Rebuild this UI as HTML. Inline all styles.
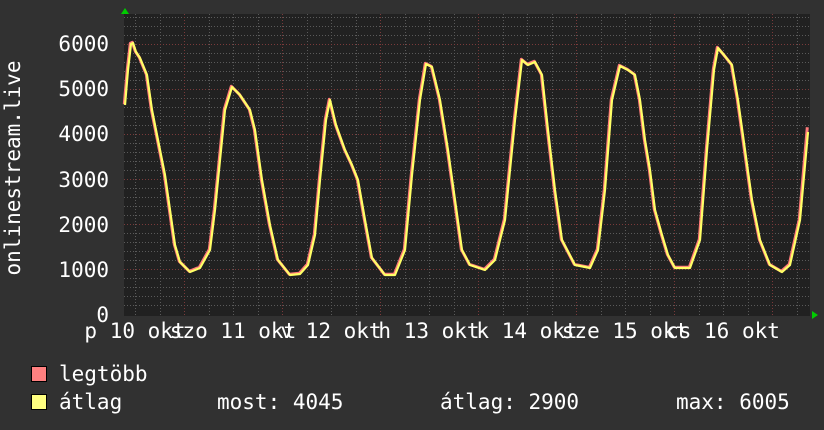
<!DOCTYPE html><html><head><style>html,body{margin:0;padding:0;background:#313131}svg{display:block}text{font-family:"DejaVu Sans Mono","Liberation Mono",monospace;fill:#fff;font-size:21px}</style></head><body>
<svg width="824" height="430" xmlns="http://www.w3.org/2000/svg">
<rect width="824" height="430" fill="#313131"/>
<rect x="124" y="14" width="686" height="302" fill="#212121"/>
<g stroke="#5a5a5a" stroke-width="1" stroke-dasharray="1,2">
<path d="M124 305.5H810M124 296.5H810M124 287.5H810M124 278.5H810M124 260.5H810M124 251.5H810M124 242.5H810M124 233.5H810M124 215.5H810M124 206.5H810M124 197.5H810M124 188.5H810M124 170.5H810M124 161.5H810M124 152.5H810M124 143.5H810M124 125.5H810M124 116.5H810M124 107.5H810M124 98.5H810M124 80.5H810M124 71.5H810M124 62.5H810M124 53.5H810M124 35.5H810M124 26.5H810M124 17.5H810"/>
<path d="M135.5 14V316M160.5 14V316M209.5 14V316M233.5 14V316M258.5 14V316M307.5 14V316M331.5 14V316M356.5 14V316M405.5 14V316M429.5 14V316M454.5 14V316M503.5 14V316M527.5 14V316M552.5 14V316M601.5 14V316M625.5 14V316M650.5 14V316M699.5 14V316M723.5 14V316M748.5 14V316M797.5 14V316"/>
</g>
<g stroke="#7a3a3a" stroke-width="1" stroke-dasharray="1,2">
<path d="M124 269.5H810M124 224.5H810M124 179.5H810M124 134.5H810M124 89.5H810M124 44.5H810"/>
<path d="M184.5 14V316M282.5 14V316M380.5 14V316M478.5 14V316M576.5 14V316M674.5 14V316M772.5 14V316"/>
</g>
<g fill="none" stroke-linejoin="round">
<polyline stroke="#ff7a7a" stroke-width="3" transform="translate(-0.7,-0.7)" points="125,105 128,70 131,44 133,43 136,52 140,58 147,75 152,110 160,150 165,175 170,210 175,245 180,262 190,272 200,268 210,250 215,210 220,160 225,110 232,87 240,95 250,110 255,130 262,180 270,225 278,260 290,275 300,274 308,265 315,235 320,180 326,120 330,100 336,125 345,150 352,165 358,180 365,220 372,258 385,275 395,275 405,250 412,175 420,100 426,64 432,67 440,100 448,150 455,200 462,250 470,265 485,270 495,260 505,220 515,120 522,60 528,65 535,62 542,75 548,130 555,190 562,240 575,265 590,268 598,250 605,190 612,100 620,66 628,70 635,75 640,100 645,140 650,170 655,210 662,235 668,255 675,268 690,268 700,240 707,150 714,70 718,48 724,55 732,65 738,100 745,150 752,200 760,240 770,265 782,272 790,265 800,220 808,128"/>
<polyline stroke="#ffff66" stroke-width="2.2" points="125,105 128,70 131,44 133,43 136,52 140,58 147,75 152,110 160,150 165,175 170,210 175,245 180,262 190,272 200,268 210,250 215,210 220,160 225,110 232,87 240,95 250,110 255,130 262,180 270,225 278,260 290,275 300,274 308,265 315,235 320,180 326,120 330,100 336,125 345,150 352,165 358,180 365,220 372,258 385,275 395,275 405,250 412,175 420,100 426,64 432,67 440,100 448,150 455,200 462,250 470,265 485,270 495,260 505,220 515,120 522,60 528,65 535,62 542,75 548,130 555,190 562,240 575,265 590,268 598,250 605,190 612,100 620,66 628,70 635,75 640,100 645,140 650,170 655,210 662,235 668,255 675,268 690,268 700,240 707,150 714,70 718,48 724,55 732,65 738,100 745,150 752,200 760,240 770,265 782,272 790,265 800,220 808,132"/>
</g>
<path d="M121 14L125 8L129 14Z" fill="#00cc00"/>
<path d="M812 311L818 315L812 319Z" fill="#00cc00"/>
<g text-anchor="end">
<text x="109" y="51">6000</text><text x="109" y="96">5000</text><text x="109" y="141">4000</text><text x="109" y="187">3000</text><text x="109" y="232">2000</text><text x="109" y="277">1000</text><text x="109" y="322">0</text>
</g>
<text transform="translate(20,168) rotate(-90)" text-anchor="middle">onlinestream.live</text>
<g text-anchor="middle">
<text x="135" y="338">p 10 okt</text><text x="233" y="338">szo 11 okt</text><text x="331" y="338">v 12 okt</text><text x="429" y="338">h 13 okt</text><text x="527" y="338">k 14 okt</text><text x="625" y="338">sze 15 okt</text><text x="723" y="338">cs 16 okt</text>
</g>
<rect x="31.5" y="366.5" width="15" height="15" fill="#ff8080" stroke="#000"/>
<rect x="31.5" y="394.5" width="15" height="15" fill="#ffff80" stroke="#000"/>
<text x="59" y="381">legtöbb</text>
<text x="59" y="409">átlag</text>
<text x="217" y="409">most: 4045</text>
<text x="440" y="409">átlag: 2900</text>
<text x="676" y="409">max: 6005</text>
</svg></body></html>
